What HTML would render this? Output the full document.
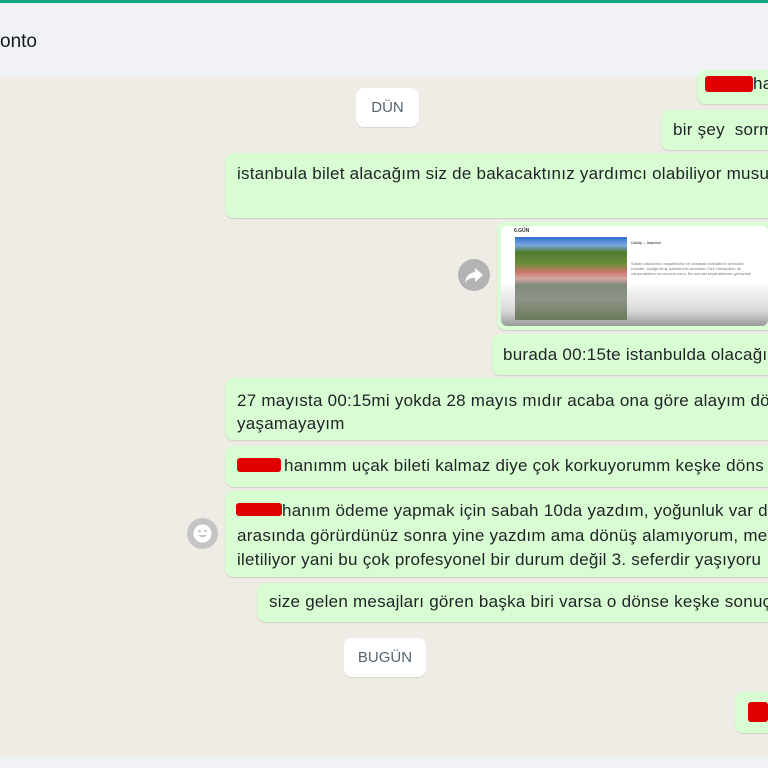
<!DOCTYPE html>
<html><head><meta charset="utf-8"><style>
*{margin:0;padding:0;box-sizing:border-box}
body{width:768px;height:768px;overflow:hidden;position:relative;background:#efebe5;font-family:"Liberation Sans","DejaVu Sans",sans-serif;color:#1f2326}
.top{position:absolute;left:0;top:0;width:768px;height:3px;background:#13a67f}
.hdr{position:absolute;left:0;top:3px;width:768px;height:74px;background:#f0f2f5}
.hdr span{position:absolute;left:0;top:28px;font-size:19px;color:#111b21}
.b{position:absolute;right:-8px;background:#d9fdd3;border-radius:8px;box-shadow:0 1px 1px rgba(0,0,0,.13);white-space:nowrap;overflow:hidden}
.t{position:absolute;font-size:17px;letter-spacing:.25px;white-space:nowrap;color:#1f2326}
.chip{position:absolute;background:#fff;border-radius:8px;box-shadow:0 1px 1px rgba(0,0,0,.1);font-size:15px;color:#54656f;text-align:center}
.red{position:absolute;background:#e00000;border-radius:3px}
.bot{position:absolute;left:0;top:757px;width:768px;height:11px;background:#f0f2f5}
</style></head><body>
<div class="top"></div>
<div class="hdr"><span>onto</span></div>

<div class="b" style="left:697px;top:70px;height:34px"></div>
<div class="red" style="left:705px;top:76px;width:48px;height:16px"></div>
<div class="t" style="left:753px;top:74px">ha</div>

<div class="chip" style="left:356px;top:88px;width:63px;height:39px;line-height:39px">DÜN</div>

<div class="b" style="left:661px;top:110px;height:40px"></div>
<div class="t" style="left:673px;top:120px">bir şey&nbsp; sorm</div>

<div class="b" style="left:225px;top:153px;height:65px"></div>
<div class="t" style="left:237px;top:164px">istanbula bilet alacağım siz de bakacaktınız yardımcı olabiliyor musu</div>

<div style="position:absolute;left:458px;top:259px;width:32px;height:32px;border-radius:50%;background:#b3b3b3"></div>
<svg style="position:absolute;left:458px;top:259px" width="32" height="32" viewBox="0 0 32 32"><path d="M17 9 L25 16 L17 23 L17 19 C12 19 9 20 7 24 C8 17 11 14 17 13 Z" fill="#fff"/></svg>

<div class="b" style="left:497px;top:222px;height:108px"></div>
<div style="position:absolute;left:501px;top:226px;width:267px;height:100px;border-radius:6px;background:linear-gradient(#fff 0,#fff 55%,#d8d8d8 85%,#9a9a9a 100%)"></div>
<div style="position:absolute;left:514px;top:228px;font-size:5px;color:#333;font-weight:bold">6.GÜN</div>
<div style="position:absolute;left:515px;top:237px;width:112px;height:83px;background:linear-gradient(#2f6fd0 0,#7aa8e0 10%,#4e7a30 18%,#6a8f3a 32%,#c9756a 42%,#d8a6a0 50%,#7f8a78 58%,#8c9488 75%,#6d7a5a 100%)"></div>
<div style="position:absolute;left:631px;top:240px;font-size:4px;color:#222">Üsküp – İstanbul</div>
<div style="position:absolute;left:631px;top:261px;width:137px;font-size:4px;line-height:5px;color:#777;white-space:nowrap;overflow:hidden">Sabah odalarınızı boşaltmanız ve alınacak kahvaltının ardından<br>transfer. Uçağa binış işlemlerinin ardından Türk Havayolları ile<br>varışa takiben turumuzun sonu. Bir sonraki seyahatinizde görüşmek</div>

<div class="b" style="left:492px;top:334px;height:41px"></div>
<div class="t" style="left:503px;top:345px">burada 00:15te istanbulda olacağı</div>

<div class="b" style="left:225px;top:378px;height:62px"></div>
<div class="t" style="left:237px;top:389px;line-height:23px">27 mayısta 00:15mi yokda 28 mayıs mıdır acaba ona göre alayım dön<br>yaşamayayım</div>

<div class="b" style="left:225px;top:446px;height:41px"></div>
<div class="red" style="left:237px;top:458px;width:44px;height:14px"></div>
<div class="t" style="left:284px;top:456px">hanımm uçak bileti kalmaz diye çok korkuyorumm keşke döns</div>

<div style="position:absolute;left:187px;top:518px;width:31px;height:31px;border-radius:50%;background:#c4c4c4"></div>
<svg style="position:absolute;left:187px;top:518px" width="31" height="31" viewBox="0 0 31 31"><circle cx="15.5" cy="15.5" r="9" fill="#fff"/><circle cx="12.5" cy="13" r="1.3" fill="#c4c4c4"/><circle cx="18.5" cy="13" r="1.3" fill="#c4c4c4"/><path d="M11 17 Q15.5 22 20 17 Z" fill="#c4c4c4"/></svg>

<div class="b" style="left:225px;top:491px;height:86px"></div>
<div class="red" style="left:236px;top:503px;width:46px;height:13px"></div>
<div class="t" style="left:282px;top:501px">hanım ödeme yapmak için sabah 10da yazdım, yoğunluk var d</div>
<div class="t" style="left:237px;top:524px;line-height:23.5px">arasında görürdünüz sonra yine yazdım ama dönüş alamıyorum, me<br>iletiliyor yani bu çok profesyonel bir durum değil 3. seferdir yaşıyoru</div>

<div class="b" style="left:257px;top:583px;height:39px"></div>
<div class="t" style="left:269px;top:592px">size gelen mesajları gören başka biri varsa o dönse keşke sonuçt</div>

<div class="chip" style="left:344px;top:638px;width:82px;height:39px;line-height:39px">BUGÜN</div>

<div class="b" style="left:735px;top:692px;height:41px"></div>
<div class="red" style="left:748px;top:702px;width:20px;height:20px"></div>

<div class="bot"></div>
</body></html>
